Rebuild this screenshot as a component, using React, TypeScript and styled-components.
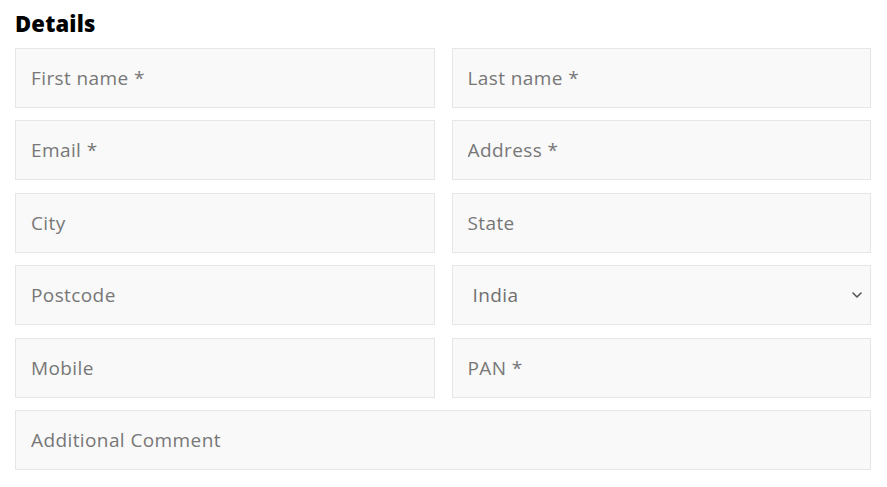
import styled, { createGlobalStyle } from 'styled-components';

const GlobalStyle = createGlobalStyle`
  body {
    margin: 0;
    background: #ffffff;
    font-family: 'Open Sans', 'Noto Sans', sans-serif;
  }
`;

const fields = [
  { name: 'first', label: 'First name *' },
  { name: 'last', label: 'Last name *' },
  { name: 'email', label: 'Email *' },
  { name: 'address', label: 'Address *' },
  { name: 'city', label: 'City' },
  { name: 'state', label: 'State' },
  { name: 'postcode', label: 'Postcode' },
];

function App() {
  return (
    <>
      <GlobalStyle />
      <DetailsSection>
        <Title>Details</Title>
        <FieldGrid>
          {fields.map(field => (
            <TextField key={field.name} name={field.name} placeholder={field.label} />
          ))}
          <SelectWrap>
            <CountrySelect defaultValue="India">
              <option>India</option>
              <option>Nepal</option>
              <option>Sri Lanka</option>
            </CountrySelect>
            <Chevron viewBox="0 0 10 6" aria-hidden="true">
              <path d="M1 1l4 4 4-4" />
            </Chevron>
          </SelectWrap>
          <TextField name="mobile" placeholder="Mobile" />
          <TextField name="pan" placeholder="PAN *" />
          <TextField name="comment" placeholder="Additional Comment" $wide />
        </FieldGrid>
      </DetailsSection>
    </>
  );
}

export default App;

const DetailsSection = styled.section`
  padding: 8px 16px 0 15px;
`;

const Title = styled.h2`
  margin: 0 0 10px;

  font-family: 'Open Sans', sans-serif;
  font-size: 22px;
  font-weight: 800;
  line-height: 30px;
  letter-spacing: 0.2px;
  color: #000000;
`;

const FieldGrid = styled.div`
  display: grid;
  grid-template-columns: 1fr 1fr;
  grid-auto-rows: 60px;
  column-gap: 17px;
  row-gap: 12.4px;
`;

const fieldBase = `
  box-sizing: border-box;
  width: 100%;
  height: 100%;
  margin: 0;

  background: #f9f9f9;
  border: 1px solid #e6e6e6;
  border-radius: 0;
  outline: none;

  font-family: 'Open Sans', sans-serif;
  font-size: 19px;
  letter-spacing: 0.4px;
  color: #6f6f6f;
`;

const TextField = styled.input<{ $wide?: boolean }>`
  ${fieldBase}
  padding: 0 15px;
  grid-column: ${({ $wide }) => ($wide ? '1 / -1' : 'auto')};

  &::placeholder {
    color: #777777;
    opacity: 1;
  }
`;

const SelectWrap = styled.div`
  position: relative;
`;

const CountrySelect = styled.select`
  ${fieldBase}
  appearance: none;
  padding: 0 30px 0 20px;
`;

const Chevron = styled.svg`
  position: absolute;
  top: 50%;
  right: 9px;
  width: 10px;
  height: 6px;
  margin-top: -3px;

  fill: none;
  stroke: #555555;
  stroke-width: 1.6;
  stroke-linecap: round;
  stroke-linejoin: round;
  pointer-events: none;
`;
